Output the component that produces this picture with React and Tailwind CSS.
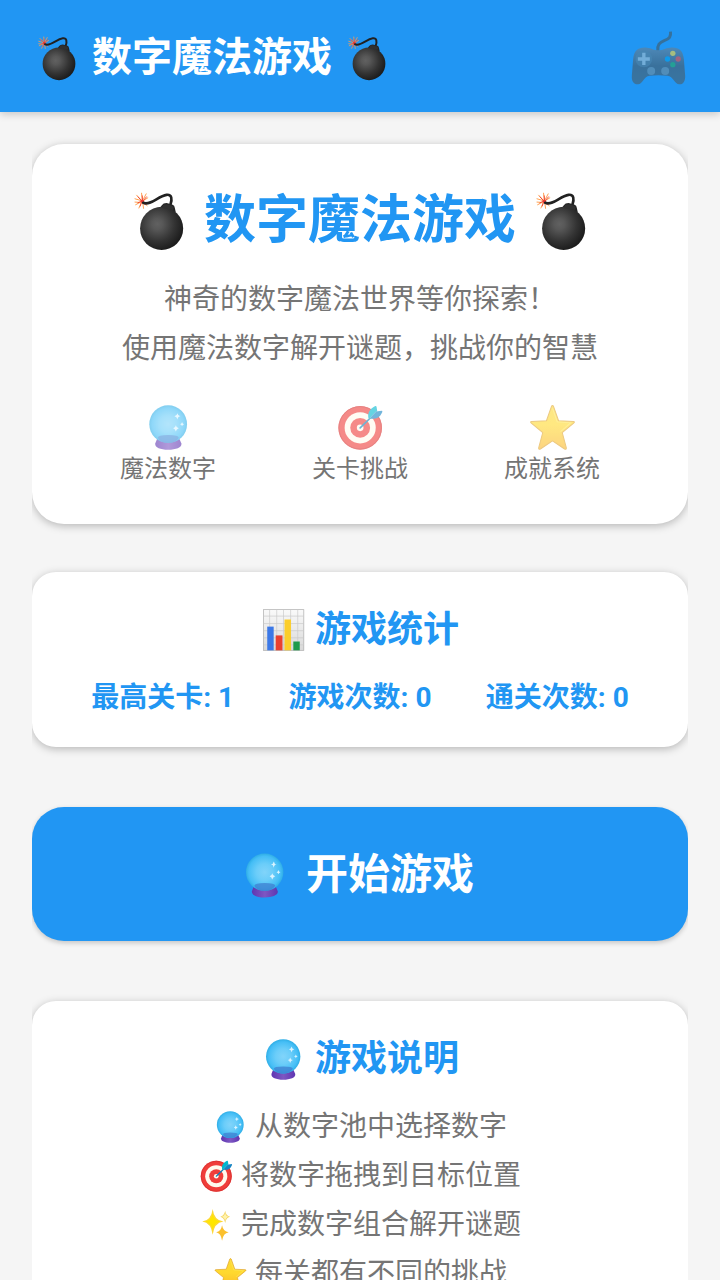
import React from "react";

function Bomb({ className }) {
  return (
    <svg viewBox="42 66 152 178" className={className} aria-hidden="true">
      <defs>
        <radialGradient id="bombBody" cx="0.4" cy="0.4" r="0.62">
          <stop offset="0" stopColor="#616161" />
          <stop offset="0.2" stopColor="#585858" />
          <stop offset="0.65" stopColor="#333333" />
          <stop offset="1" stopColor="#1c1c1c" />
        </radialGradient>
      </defs>
      <g strokeLinecap="round" strokeWidth="3">
        <path d="M66 92 45 86M66 94 47 104M66 94 57 114M68 94 71 115M64 90 50 75M67 88 65 69M70 88 79 71M70 92 84 83M60 97 45 96M72 98 82 107" stroke="#ffa04d" />
        <path d="M66 93 54 80M66 93 54 98M66 93 61 108M68 93 67 77M70 93 76 104M70 92 80 80" stroke="#f04a3a" />
      </g>
      <circle cx="67" cy="93" r="5" fill="#e53935" />
      <path d="M70 98C92 108 115 78 141 74C158 72 158 88 153 103" fill="none" stroke="#212121" strokeWidth="8" strokeLinecap="round" />
      <path d="M126 106Q131 99 141 99L158 103Q166 105 166 113L169 127L119 116Z" fill="#242424" />
      <circle cx="126" cy="176" r="65.500" fill="url(#bombBody)" />
      <path d="M130 104Q146 99 162 110L161 120L128 114Z" fill="#303030" />
    </svg>
  );
}

function CrystalBall({ className }) {
  return (
    <svg viewBox="26 26 116 136" className={className} aria-hidden="true">
      <defs>
        <radialGradient id="ballGlass" cx="0.5" cy="0.5" r="0.5">
          <stop offset="0" stopColor="#81d4fa" />
          <stop offset="0.45" stopColor="#6bcdf9" />
          <stop offset="0.85" stopColor="#45bef6" />
          <stop offset="1" stopColor="#2faee6" />
        </radialGradient>
        <linearGradient id="ballStand" x1="0" x2="1">
          <stop offset="0" stopColor="#5e35b1" />
          <stop offset="0.5" stopColor="#7e57c2" />
          <stop offset="1" stopColor="#5e35b1" />
        </linearGradient>
      </defs>
      <path d="M51 124Q55 117 83 117Q111 117 115 124L123 142C125 154 106 161 83 161C60 161 42 154 44 142Z" fill="url(#ballStand)" />
      <circle cx="83" cy="84" r="57" fill="url(#ballGlass)" />
      <path d="M52 125Q52 117 83 117Q115 117 115 125C108 135 99 141 83 141C67 141 57 135 52 125Z" fill="#3f7fd0" opacity="0.75" />
      <path d="M111 51Q112 59 120 60Q112 61 111 70Q109 61 102 60Q109 59 111 51ZM106 87Q108 95 115 96Q108 98 106 106Q105 98 98 96Q105 95 106 87ZM125 77Q126 82 131 84Q126 85 125 90Q124 85 119 84Q124 82 125 77Z" fill="#d8f3ff" />
    </svg>
  );
}

function Target({ className }) {
  return (
    <svg viewBox="37 26 136 136" className={className} aria-hidden="true">
      <circle cx="104" cy="95" r="66" fill="#f03e3a" />
      <circle cx="104" cy="95" r="64" fill="none" stroke="#d32f2f" strokeWidth="3" />
      <circle cx="104" cy="95" r="47" fill="#fffbee" />
      <circle cx="104" cy="95" r="30" fill="#f03e3a" />
      <circle cx="104" cy="95" r="10" fill="#fffbee" />
      <path d="M104 95 140 60" stroke="#0f80b8" strokeWidth="5" strokeLinecap="round" />
      <path d="M129 66C125 45 139 34 150 29Q154 28 154 34L156 48L136 67Z" fill="#00b8cf" />
      <path d="M134 67L150 48Q155 44 170 43Q173 45 169 51C163 65 149 70 134 67Z" fill="#1685c4" />
      <path d="M133 66 154 44" stroke="#48a9d2" strokeWidth="3" />
    </svg>
  );
}

function Star({ className }) {
  return (
    <svg viewBox="0 0 134 134" className={className} aria-hidden="true">
      <defs>
        <linearGradient id="starFill" x1="0" y1="0" x2="0" y2="1">
          <stop offset="0" stopColor="#fdd835" />
          <stop offset="0.45" stopColor="#ffd92e" />
          <stop offset="1" stopColor="#fbb72b" />
        </linearGradient>
      </defs>
      <path d="M64 4Q67 -1 70 4L85 47L129 49Q135 50 130 54L96 82L108 127Q109 134 103 131L67 107L31 131Q25 134 26 127L38 82L4 54Q-1 50 5 49L49 47Z" fill="url(#starFill)" stroke="#e0a62f" strokeWidth="3" strokeLinejoin="round" />
      <path d="M67 10 81 50 121 53 91 79" fill="none" stroke="#ffee6e" strokeWidth="3" opacity="0.6" />
    </svg>
  );
}

function Sparkles({ className }) {
  return (
    <svg viewBox="0 0 82 92" className={className} aria-hidden="true">
      <path d="M30 0Q34 33 61 36Q34 40 30 74Q26 40 0 36Q26 33 30 0Z" fill="#fdd835" />
      <path d="M30 12Q33 34 52 36Q33 39 30 62Q27 39 8 36Q27 33 30 12Z" fill="#ffe600" />
      <path d="M57 47Q60 65 76 67Q60 70 57 91Q54 70 40 67Q54 65 57 47Z" fill="#fbc02d" />
      <path d="M66 5Q68 20 80 22Q68 25 66 40Q63 25 52 22Q63 20 66 5Z" fill="#f4d35e" />
      <path d="M66 10Q67 21 76 22Q67 24 66 35Q64 24 56 22Q64 21 66 10Z" fill="#fff3ad" />
    </svg>
  );
}

function BarChart({ className }) {
  return (
    <svg viewBox="66 60 132 124" className={className} aria-hidden="true">
      <defs>
        <linearGradient id="chartPaper" x1="0" y1="0" x2="0" y2="1">
          <stop offset="0" stopColor="#fafafa" />
          <stop offset="1" stopColor="#d9d9d9" />
        </linearGradient>
      </defs>
      <rect x="73" y="62" width="119" height="120" fill="url(#chartPaper)" stroke="#aaaaaa" strokeWidth="2" />
      <path d="M91 62V182M112 62V182M132 62V182M153 62V182M174 62V182M73 81H192M73 103H192M73 124H192M73 145H192M73 166H192" stroke="#c9c9c9" strokeWidth="2" />
      <rect x="84" y="112" width="19" height="70" fill="#3b78e7" />
      <rect x="109" y="138" width="20" height="44" fill="#ea4030" />
      <rect x="135" y="91" width="19" height="91" fill="#fbce2b" />
      <rect x="161" y="156" width="19" height="26" fill="#1e9b4c" />
    </svg>
  );
}

function Gamepad({ className }) {
  return (
    <svg viewBox="93 64 164 162" className={className} aria-hidden="true">
      <defs>
        <linearGradient id="padBody" x1="0" y1="0" x2="0" y2="1">
          <stop offset="0" stopColor="#6b8090" />
          <stop offset="0.5" stopColor="#4a5963" />
          <stop offset="1" stopColor="#4a5f6b" />
        </linearGradient>
      </defs>
      <path d="M173 124C171 105 178 99 192 93C208 87 213 81 211 66" fill="none" stroke="#455a64" strokeWidth="9" />
      <path d="M174 122C190 122 193 115 210 114C236 112 248 122 251 148L255 198C256 216 247 225 237 224C224 223 219 200 202 198Q174 195 148 198C131 200 127 223 114 224C101 225 94 215 95 198L99 148C102 122 114 112 140 114C156 115 159 122 174 122Z" fill="url(#padBody)" />
      <circle cx="131" cy="148" r="25" fill="#607d8b" opacity="0.65" />
      <path d="M126 129H136V143H149V153H136V166H126V153H113V143H126Z" fill="#a9bdc7" />
      <circle cx="153" cy="184" r="12" fill="#78909c" opacity="0.85" />
      <circle cx="195" cy="184" r="12" fill="#78909c" opacity="0.85" />
      <circle cx="218" cy="131" r="8" fill="#fdd835" />
      <circle cx="234" cy="148" r="8" fill="#f44336" />
      <circle cx="202" cy="148" r="8" fill="#039be5" />
      <circle cx="218" cy="165" r="8" fill="#26a659" />
    </svg>
  );
}

const features = [
  { label: "魔法数字", Icon: CrystalBall },
  { label: "关卡挑战", Icon: Target },
  { label: "成就系统", Icon: Star },
];

const stats = [
  { label: "最高关卡", value: 1 },
  { label: "游戏次数", value: 0 },
  { label: "通关次数", value: 0 },
];

const rules = [
  { text: "从数字池中选择数字", Icon: CrystalBall },
  { text: "将数字拖拽到目标位置", Icon: Target },
  { text: "完成数字组合解开谜题", Icon: Sparkles },
  { text: "每关都有不同的挑战", Icon: Star },
];

export default function App() {
  return (
    <div className="flex h-screen flex-col bg-[#f5f5f5] font-['Roboto','Noto_Sans_CJK_SC',sans-serif] text-[#757575]">
      <header className="relative z-10 flex h-28 shrink-0 items-center justify-between bg-[#2196f3] pt-1 pr-[34px] pl-[38px] shadow-[0_2px_8px_rgba(0,0,0,0.2)]">
        <div className="flex items-center gap-4 text-[40px] leading-[56px] font-bold text-white">
          <Bomb className="h-[45px] w-[38px]" />
          <h1>数字魔法游戏</h1>
          <Bomb className="h-[45px] w-[38px]" />
        </div>
        <button type="button" aria-label="游戏" className="opacity-60">
          <Gamepad className="h-[54px] w-[55px]" />
        </button>
      </header>

      <main className="mx-8 min-h-0 flex-1 overflow-y-auto pt-8 pb-8 [scrollbar-width:none]">
        <section className="rounded-[32px] bg-white px-10 pt-[41px] pb-10 text-center shadow-[0_2px_8px_rgba(0,0,0,0.26)]">
          <div className="flex items-center justify-center gap-5 text-[52px] leading-[72px] font-bold text-[#2196f3]">
            <Bomb className="h-[59px] w-[50px]" />
            <h2>数字魔法游戏</h2>
            <Bomb className="h-[59px] w-[50px]" />
          </div>
          <p className="mt-[18px] text-[28px] leading-[49px]">
            神奇的数字魔法世界等你探索！
            <br />
            使用魔法数字解开谜题，挑战你的智慧
          </p>
          <ul className="mt-8 grid grid-cols-3">
            {features.map(({ label, Icon }) => (
              <li key={label} className="flex flex-col items-center gap-1">
                <Icon className="h-[45px] w-[45px] opacity-60" />
                <span className="text-2xl leading-[30px]">{label}</span>
              </li>
            ))}
          </ul>
        </section>

        <section className="mt-12 rounded-3xl bg-white px-8 pt-[33px] pb-7 text-[#2196f3] shadow-[0_2px_8px_rgba(0,0,0,0.26)]">
          <div className="flex items-center justify-center gap-[9px]">
            <BarChart className="h-[42px] w-[45px]" />
            <h2 className="text-4xl leading-[50px] font-bold">游戏统计</h2>
          </div>
          <ul className="mt-[22px] grid grid-cols-3 text-center text-[28px] leading-[42px] font-bold">
            {stats.map(({ label, value }) => (
              <li key={label}>
                {label}: {value}
              </li>
            ))}
          </ul>
        </section>

        <button
          type="button"
          className="mt-[60px] flex w-full items-center justify-center gap-[22px] rounded-[32px] bg-[#2196f3] pt-[39px] pb-[37px] text-[42px] leading-[58px] font-bold text-white shadow-[0_2px_5px_rgba(0,0,0,0.2)]"
        >
          <CrystalBall className="h-[45px] w-[38px]" />
          开始游戏
        </button>

        <section className="mt-[60px] rounded-3xl bg-white px-8 pt-[33px] pb-8 shadow-[0_2px_8px_rgba(0,0,0,0.26)]">
          <div className="flex items-center justify-center gap-[9px] text-[#2196f3]">
            <CrystalBall className="h-[41px] w-[45px]" />
            <h2 className="text-4xl leading-[50px] font-bold">游戏说明</h2>
          </div>
          <ul className="mt-[18px] text-[28px] leading-[49px]">
            {rules.map(({ text, Icon }) => (
              <li key={text} className="flex items-center justify-center gap-[7px]">
                <Icon className="h-[32px] w-[35px]" />
                {text}
              </li>
            ))}
          </ul>
        </section>
      </main>
    </div>
  );
}
